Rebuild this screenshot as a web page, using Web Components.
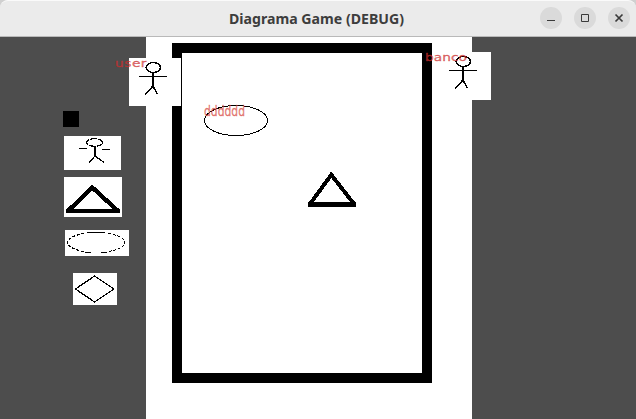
<!DOCTYPE html>
<html lang="en"><head><meta charset="utf-8"><title>Diagrama Game (DEBUG)</title>
<style>html,body{margin:0;width:636px;height:419px;overflow:hidden;background:#d0d0d0}</style></head>
<body>
<game-window></game-window>
<script>
class Base extends HTMLElement{
  connectedCallback(){
    const r=this.attachShadow({mode:'open'});
    const t=document.createElement('template');
    t.innerHTML=this.view();
    r.append(t.content.cloneNode(true));
  }
}
customElements.define('window-button',class extends Base{
  view(){
    const icons={
      min:'<path d="M7 13.5h8" stroke-width="1"/>',
      max:'<path d="M7.5 7.5h7v7h-7z" stroke-width="1"/>',
      close:'<path d="M7.5 7.5l7 7M14.5 7.5l-7 7" stroke-width="1.7"/>'};
    return `<style>:host{display:block;width:22px;height:22px;border-radius:50%;background:#dadada}
svg{display:block}</style><svg width="22" height="22" fill="none" stroke="#3a3a3a">${icons[this.getAttribute('kind')]}</svg>`;
  }
});
customElements.define('title-bar',class extends Base{
  view(){return `<style>
:host{display:grid;grid-template-columns:1fr 178px 1fr;align-items:center;box-sizing:border-box;height:37px;background:#ebebeb;border-top:1px solid #fafafa;border-bottom:1px solid #b9b9b9;border-radius:8px 8px 0 0}
.title{grid-column:2;display:block;width:178px;height:35px}
text{font:bold 14px "Noto Sans","Open Sans",sans-serif;fill:#3d3d3d}
.b{display:flex;gap:12px;justify-content:flex-end;padding:0 6px 1px 0}</style>
<svg class="title"><text x="0" y="23" textLength="175" lengthAdjust="spacingAndGlyphs">Diagrama Game (DEBUG)</text></svg>
<div class="b"><window-button kind="min"></window-button><window-button kind="max"></window-button><window-button kind="close"></window-button></div>`}
});
/* Shapes are drawn in their own box; the box is placed on the game's free canvas. */
const shapes={
  actor:'<g stroke-width="1.5"><ellipse cx="24.3" cy="9.5" rx="7.2" ry="5"/><path d="M24.2 15V28" stroke-width="2"/><path d="M10 18.5H38" stroke-width="1"/><path d="M24 28L16 36.5M24 28L28.5 36.5"/></g>',
  smallActor:'<g stroke-width="1.3"><ellipse cx="30.5" cy="6.5" rx="8" ry="3.8" stroke-dasharray="7 1"/><path d="M31 10V21" stroke-width="2"/><path d="M15 12.5H23M38 13.5H46" stroke-width="1"/><path d="M31 20L25 26.5M31 20L40 26.5"/></g>',
  smallTriangle:'<path d="M4 34L28.3 10.5L54 34" stroke-width="4.4"/><path d="M2 34H56" stroke-width="4"/>',
  smallEllipse:'<g stroke-width="1"><path d="M22 2.5H40M20 22.5H26M36 22.5H42"/><path d="M19 3.5A29 10 0 0 0 19 21.5M43.5 3.5A29 10 0 0 1 43.5 21.5" stroke-dasharray="3 1.5"/></g>',
  diamond:'<path d="M21.5 3L41 16L21.5 29L2.5 16Z" stroke-width="1.3"/>',
  triangle:'<path d="M2 32L23.3 2.8L46 32" stroke-width="4"/><path d="M0 32.5H48" stroke-width="5"/>',
  ellipse:'<ellipse cx="32" cy="15.5" rx="31.5" ry="15" stroke-width="1"/>'
};
customElements.define('diagram-shape',class extends Base{
  view(){
    const a=n=>this.getAttribute(n);
    return `<style>:host{display:block;position:absolute;left:${a('x')}px;top:${a('y')}px;width:${a('w')}px;height:${a('h')}px;background:${a('fill')||'#fff'}}
svg{display:block;overflow:visible}</style><svg width="${a('w')}" height="${a('h')}" fill="none" stroke="#000" shape-rendering="crispEdges">${shapes[a('kind')]||''}</svg>`;
  }
});
customElements.define('shape-label',class extends Base{
  view(){
    const a=n=>this.getAttribute(n);
    return `<style>:host{display:block;position:absolute;left:${a('x')}px;top:${a('y')}px;width:${a('w')}px;height:16px}
svg{display:block;overflow:visible}text{font:${a('size')}px "DejaVu Sans",sans-serif;fill:${a('tone')};stroke:${a('tone')};stroke-width:.4px}</style>
<svg width="${a('w')}" height="16"><g transform="scale(${a('sx')} 1)"><text x="0" y="12" textLength="${a('w')/a('sx')}">${this.textContent}</text></g></svg>`;
  }
});
customElements.define('game-stage',class extends Base{
  view(){return `<style>
:host{display:flex;justify-content:flex-start;position:relative;height:382px;background:#4d4d4d;overflow:hidden}
.page{margin-left:146px;width:326px;box-sizing:border-box;padding:6px 0 0 26px;background:#fff}
.frame{width:240px;height:320px;border:10px solid #000}</style>
<div class="page"><div class="frame"></div></div>
<diagram-shape x="63" y="74" w="16" h="16" fill="#000"></diagram-shape>
<diagram-shape kind="smallActor" x="64" y="99" w="57" h="34"></diagram-shape>
<diagram-shape kind="smallTriangle" x="64" y="140" w="58" h="40"></diagram-shape>
<diagram-shape kind="smallEllipse" x="65" y="193" w="64" h="26"></diagram-shape>
<diagram-shape kind="diamond" x="73" y="236" w="44" h="32"></diagram-shape>
<diagram-shape kind="actor" x="129" y="21" w="52" h="48"></diagram-shape>
<diagram-shape kind="actor" x="439" y="15" w="52" h="48"></diagram-shape>
<diagram-shape kind="ellipse" x="204" y="68" w="64" h="31" fill="transparent"></diagram-shape>
<diagram-shape kind="triangle" x="308" y="135" w="48" h="35" fill="transparent"></diagram-shape>
<shape-label x="115" y="18" w="31.5" size="11" sx="1.25" tone="rgba(205,45,45,.65)">user</shape-label>
<shape-label x="425" y="12" w="42" size="11" sx="1.25" tone="rgba(205,45,45,.65)">banco</shape-label>
<shape-label x="203.5" y="67" w="41" size="13.5" sx=".8" tone="rgba(215,70,60,.65)">dddddd</shape-label>`}
});
customElements.define('game-window',class extends Base{
  view(){return `<style>:host{display:flex;flex-direction:column;width:636px;height:419px}</style><title-bar></title-bar><game-stage></game-stage>`}
});
</script>
</body></html>
